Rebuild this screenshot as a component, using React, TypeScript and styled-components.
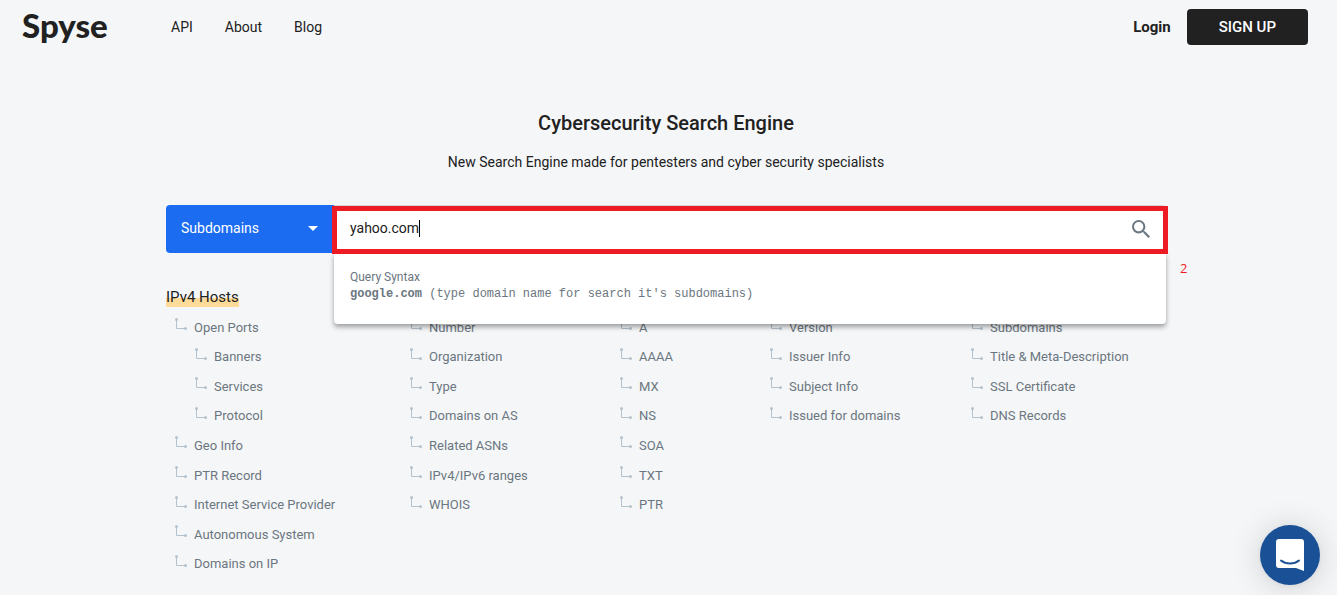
import React, { useState } from "react";
import styled, { createGlobalStyle } from "styled-components";

const GlobalStyle = createGlobalStyle`
  *, *::before, *::after { box-sizing: border-box; }
  body {
    margin: 0;
    background: #f5f6f8;
    color: #212121;
    font: 14px/20px Roboto, "Liberation Sans", sans-serif;
  }
`;

const Page = styled.div`
  min-height: 100vh;
  padding-right: 5px;
`;

const Header = styled.header`
  display: flex;
  align-items: center;
  height: 54px;
  padding: 0 24px 0 22px;
`;

const Logo = styled.a`
  width: 117px;
  padding-bottom: 4px;
  color: #212121;
  font: 900 33px/40px Lato, sans-serif;
  text-decoration: none;
`;

const Nav = styled.nav`
  display: flex;
  flex: 1;
  gap: 32px;
  margin-left: 32px;
`;

const NavLink = styled.a<{ $strong?: boolean }>`
  color: #212121;
  font-weight: ${(p) => (p.$strong ? 700 : 400)};
  font-size: ${(p) => (p.$strong ? 15 : 14)}px;
  text-decoration: none;
`;

const SignUp = styled.button`
  height: 36px;
  margin-left: 16px;
  padding: 0 32px;
  border: 0;
  border-radius: 4px;
  background: #212121;
  color: #fff;
  font: 500 15px/20px Roboto, sans-serif;
`;

const Main = styled.main`
  max-width: 1000px;
  margin: 0 auto;
  padding-top: 54px;
`;

const Title = styled.h1`
  margin: 0;
  font-size: 20px;
  font-weight: 500;
  line-height: 30px;
  text-align: center;
`;

const Subtitle = styled.p`
  margin: 14px 0 33px;
  text-align: center;
`;

const SearchBar = styled.form`
  position: relative;
  display: flex;
  height: 48px;
`;

const Category = styled.label`
  position: relative;
  display: flex;
  width: 168px;
  color: #fff;
`;

const CategorySelect = styled.select`
  width: 100%;
  padding: 0 15px 2px;
  border: 0;
  border-radius: 4px 0 0 4px;
  appearance: none;
  background: #1c6cf2;
  color: #fff;
  font: 14px/20px Roboto, sans-serif;
`;

const Chevron = styled.svg`
  position: absolute;
  top: 21px;
  right: 16px;
  pointer-events: none;
`;

const Field = styled.div`
  display: flex;
  flex: 1;
  align-items: center;
  padding: 0 16px 2px;
  border-top: 1px solid #cfd8dc;
  border-radius: 0 4px 4px 0;
  background: #fff;
`;

const Query = styled.input`
  field-sizing: content;
  padding: 0 0 2px;
  border: 0;
  outline: 0;
  background: transparent;
  caret-color: transparent;
  color: #212121;
  font: 14px/20px Roboto, sans-serif;
`;

const Caret = styled.span`
  width: 1px;
  height: 17px;
  background: #000;
`;

const SearchButton = styled.button`
  display: flex;
  margin-left: auto;
  padding: 0;
  border: 0;
  background: none;
`;

const Frame = styled.div`
  position: absolute;
  z-index: 2;
  top: 1px;
  right: -2px;
  bottom: -1px;
  left: 166px;
  border: 5px solid #ed1c24;
  pointer-events: none;
`;

const Marker = styled.span`
  position: absolute;
  top: 53px;
  left: calc(100% + 14px);
  color: #ed1c24;
  font: 13px/20px "Open Sans", sans-serif;
`;

const Hint = styled.div`
  position: absolute;
  z-index: 1;
  top: 48px;
  right: 0;
  left: 168px;
  height: 71px;
  padding: 16px;
  border-radius: 0 0 4px 4px;
  background: #fff;
  box-shadow: 0 3px 5px rgba(0, 0, 0, 0.36);
  color: #6b7680;
  font-size: 12px;
  line-height: 17px;
`;

const Syntax = styled.div`
  font-family: "Liberation Mono", monospace;
`;

const Columns = styled.div`
  display: grid;
  grid-template-columns: 235fr 210fr 150fr 201fr 204fr;
  padding-top: 34px;
`;

const ColumnHead = styled.div`
  height: 26px;
`;

const Heading = styled.h2`
  display: inline-block;
  margin: 0;
  background: linear-gradient(transparent 11px, #ffdb99 11px);
  font: 400 15px/20px Roboto, sans-serif;
`;

const List = styled.ul`
  display: grid;
  grid-template-rows: repeat(9, 1fr);
  height: 266px;
  margin: 0;
  padding: 0 0 0 9px;
  list-style: none;
`;

const Item = styled.li<{ $nested: boolean }>`
  display: flex;
  align-items: center;
  gap: 6px;
  padding-left: ${(p) => (p.$nested ? 20 : 0)}px;
  color: #6b7680;
  font: 13px/20px Roboto, sans-serif;
  white-space: nowrap;
`;

const Branch = styled.svg`
  flex: none;
  margin-bottom: 6px;
`;

const Chat = styled.button`
  position: fixed;
  right: 17px;
  bottom: 10px;
  display: grid;
  place-items: center;
  width: 60px;
  height: 60px;
  padding: 0;
  border: 0;
  border-radius: 50%;
  background: #1a5196;
  box-shadow: 0 1px 6px rgba(0, 0, 0, 0.06), 0 2px 32px rgba(0, 0, 0, 0.16);
`;

type Entry = { label: string; nested?: boolean };
type ColumnData = { id: string; heading?: string; entries: Entry[] };

const plain = (...labels: string[]): Entry[] => labels.map((label) => ({ label }));

const columns: ColumnData[] = [
  {
    id: "hosts",
    heading: "IPv4 Hosts",
    entries: [
      { label: "Open Ports" },
      { label: "Banners", nested: true },
      { label: "Services", nested: true },
      { label: "Protocol", nested: true },
      ...plain("Geo Info", "PTR Record", "Internet Service Provider", "Autonomous System", "Domains on IP"),
    ],
  },
  {
    id: "as",
    entries: plain("Number", "Organization", "Type", "Domains on AS", "Related ASNs", "IPv4/IPv6 ranges", "WHOIS"),
  },
  { id: "dns", entries: plain("A", "AAAA", "MX", "NS", "SOA", "TXT", "PTR") },
  { id: "ssl", entries: plain("Version", "Issuer Info", "Subject Info", "Issued for domains") },
  { id: "domains", entries: plain("Subdomains", "Title & Meta-Description", "SSL Certificate", "DNS Records") },
];

export default function App() {
  const [query, setQuery] = useState("yahoo.com");

  return (
    <Page>
      <GlobalStyle />
      <Header>
        <Logo href="#">Spyse</Logo>
        <Nav>
          <NavLink href="#api">API</NavLink>
          <NavLink href="#about">About</NavLink>
          <NavLink href="#blog">Blog</NavLink>
        </Nav>
        <NavLink href="#login" $strong>Login</NavLink>
        <SignUp type="button">SIGN UP</SignUp>
      </Header>
      <Main>
        <Title>Cybersecurity Search Engine</Title>
        <Subtitle>New Search Engine made for pentesters and cyber security specialists</Subtitle>
        <SearchBar onSubmit={(e) => e.preventDefault()}>
          <Category>
            <CategorySelect aria-label="Category">
              <option>Subdomains</option>
            </CategorySelect>
            <Chevron width="10" height="5" viewBox="0 0 10 5" aria-hidden="true">
              <path d="M0 0h10L5 5z" fill="#fff" />
            </Chevron>
          </Category>
          <Field>
            <Query aria-label="Search" value={query} onChange={(e) => setQuery(e.target.value)} />
            <Caret />
            <SearchButton type="submit" aria-label="Search">
              <svg width="18" height="18" viewBox="3 3 17.49 17.49" fill="#6b7680">
                <path d="M15.5 14h-.79l-.28-.27A6.47 6.47 0 0 0 16 9.5 6.5 6.5 0 1 0 9.5 16c1.61 0 3.09-.59 4.23-1.57l.27.28v.79l5 4.99L20.49 19l-4.99-5zm-6 0C7.01 14 5 11.99 5 9.5S7.01 5 9.5 5 14 7.01 14 9.5 11.99 14 9.5 14z" />
              </svg>
            </SearchButton>
          </Field>
          <Hint>
            <div>Query Syntax</div>
            <Syntax>
              <b>google.com</b> (type domain name for search it's subdomains)
            </Syntax>
          </Hint>
          <Frame />
          <Marker>2</Marker>
        </SearchBar>
        <Columns>
          {columns.map((column) => (
            <section key={column.id}>
              <ColumnHead>{column.heading && <Heading>{column.heading}</Heading>}</ColumnHead>
              <List>
                {column.entries.map((entry) => (
                  <Item key={entry.label} $nested={!!entry.nested}>
                    <Branch width="13" height="13" viewBox="0 0 13 13" aria-hidden="true">
                      <path d="M1.5 2v8.5H11" fill="none" stroke="#b4c2cd" />
                      <circle cx="1.5" cy="1.5" r="1.5" fill="#b4c2cd" />
                      <circle cx="10.5" cy="10.5" r="1.5" fill="#b4c2cd" />
                    </Branch>
                    {entry.label}
                  </Item>
                ))}
              </List>
            </section>
          ))}
        </Columns>
      </Main>
      <Chat type="button" aria-label="Open chat">
        <svg width="28" height="32" viewBox="0 0 28 32">
          <path d="M3 0h22a3 3 0 0 1 3 3v29l-8-3H3a3 3 0 0 1-3-3V3a3 3 0 0 1 3-3z" fill="#fff" />
          <path d="M5 21.5c5 4 13 4 18 0" fill="none" stroke="#1a5196" strokeWidth="2" strokeLinecap="round" />
        </svg>
      </Chat>
    </Page>
  );
}
